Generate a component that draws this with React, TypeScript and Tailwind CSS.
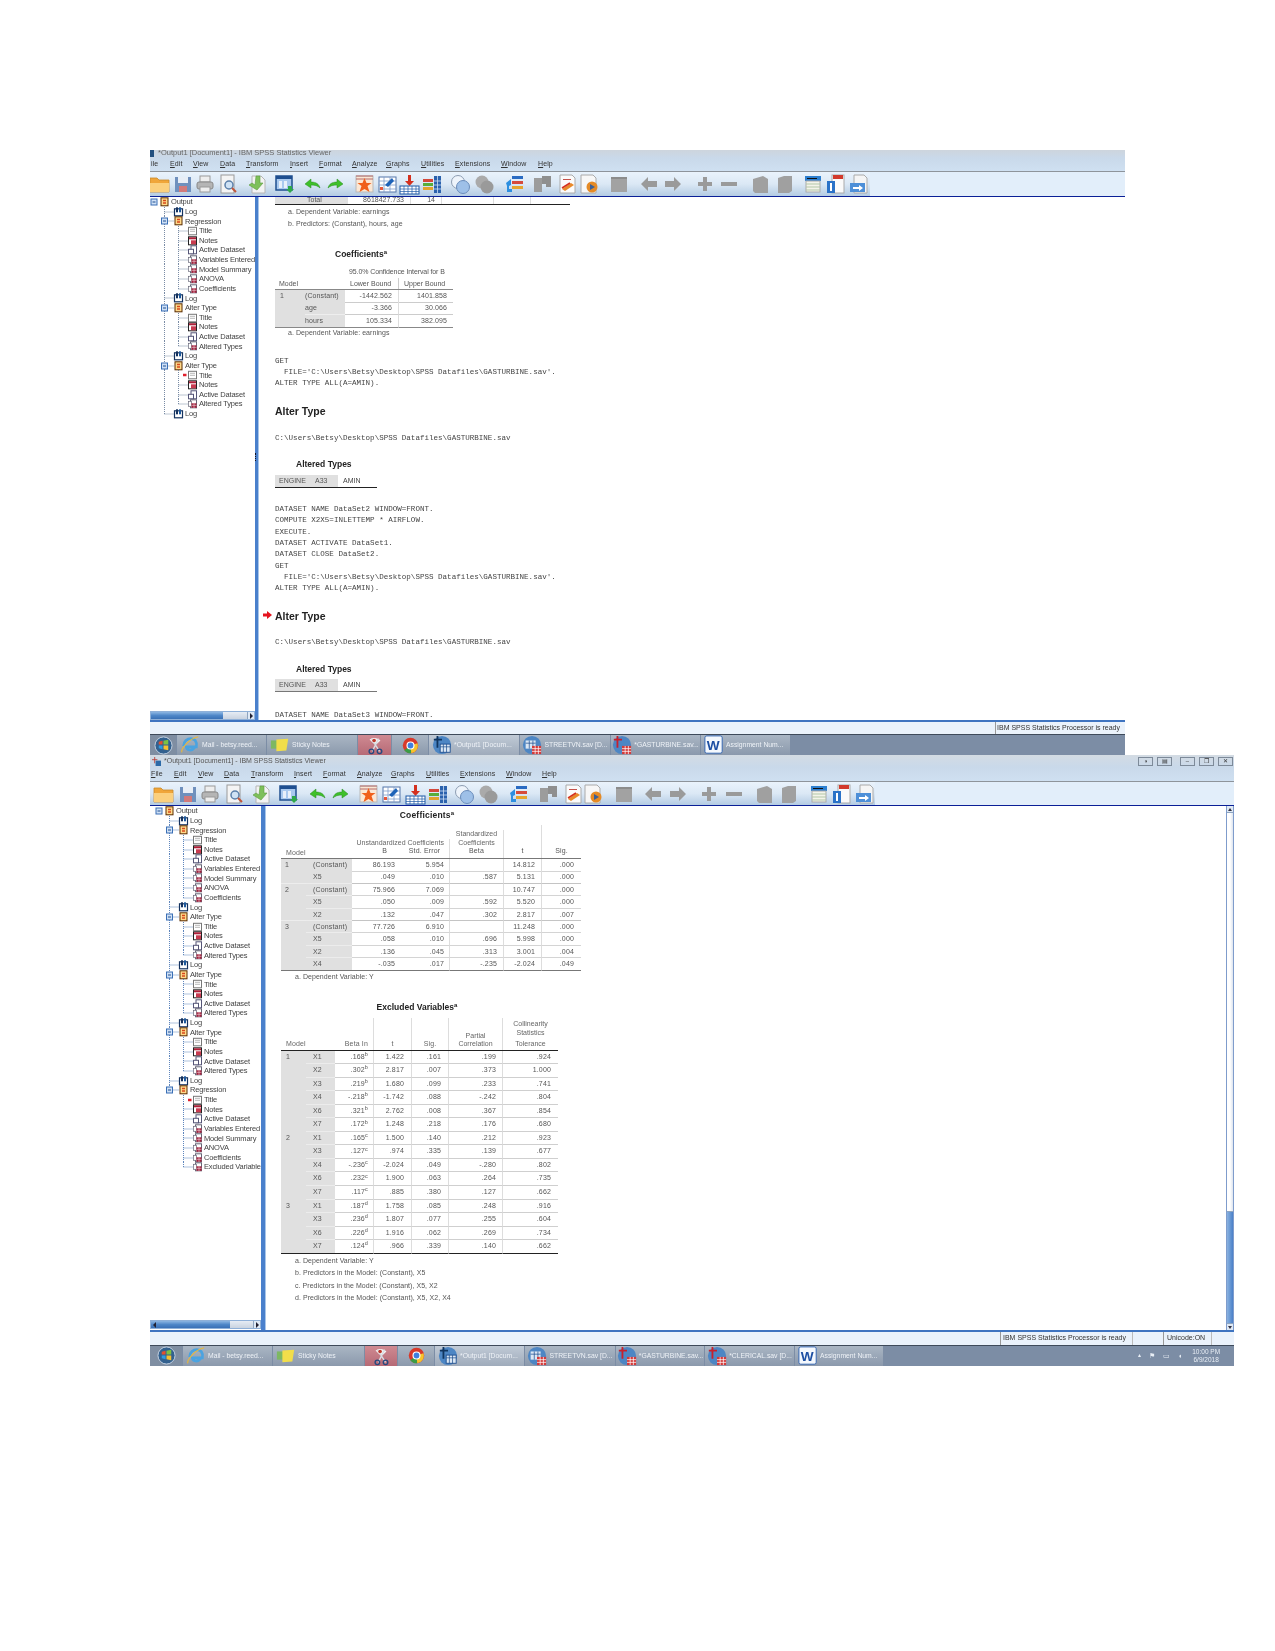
import React from "react";

const TOP_GAPS = [0,23,22,23,28,29,27,23,29,23,22,23,28,24,30,28,25,22,29,31,24,32,24,32,24,28,23,23];
const BOTTOM_GAPS = [0,24,22,24,26,29,28,23,28,23,24,23,26,24,30,30,25,20,30,30,25,31,25,31,24,30,23,23];
const TOOLS = ["folder","save","print","preview","goto","export","undo","redo","star","gridup","griddown","bars","circles","circlesg","list","tree","pen","pageo","square","left","right","plus","minus","cube","cube2","note","tpage","expage"];

function ToolIcon({ name }: { name: string }) {
  const g = "#9a9a9a";
  switch (name) {
    case "folder": return <><path d="M1 5h7l2 2h10v12H1z" fill="#f0a63a" stroke="#c98a2c" strokeWidth=".8"/><path d="M1 10h19v9H1z" fill="#fbd07e"/></>;
    case "save": return <><rect x="3" y="4" width="16" height="15" fill="#6f90bd"/><rect x="6" y="4" width="10" height="6" fill="#e8eef6"/><rect x="7" y="13" width="8" height="6" fill="#d27a7a"/></>;
    case "print": return <><rect x="6" y="3" width="10" height="6" fill="#eee" stroke={g}/><rect x="3" y="9" width="16" height="7" rx="2" fill="#b5b5b5" stroke="#888"/><rect x="6" y="14" width="10" height="5" fill="#eee" stroke={g}/></>;
    case "preview": return <><rect x="4" y="2" width="13" height="18" fill="#f4f4f4" stroke={g}/><circle cx="12" cy="12" r="4" fill="#cfe2f5" stroke="#5a7faa" strokeWidth="1.5"/><path d="M15 15l4 4" stroke="#c0553a" strokeWidth="2"/></>;
    case "goto": return <><path d="M7 3h9l4 4v13H7z" fill="#f3f3f3" stroke="#b5b5b5"/><path d="M11 3h4v7h3l-6 7-8-5 3-2 3 2z" fill="#7ec05a" stroke="#5d9c3f" strokeWidth=".6"/></>;
    case "export": return <><rect x="2" y="3" width="16" height="14" fill="#a9c9ef" stroke="#1f4f90" strokeWidth="1.5"/><rect x="2" y="3" width="16" height="3" fill="#1f4f90"/><rect x="5" y="8" width="3" height="7" fill="#e8f0fa"/><rect x="10" y="8" width="3" height="7" fill="#e8f0fa"/><path d="M14 13h4v3h2l-4 4-4-4h2z" fill="#2fa84a"/></>;
    case "undo": return <path d="M4 11l6-5v3c5 0 8 2 9 6-2-2-5-3-9-3v3z" fill="#3fc02a" stroke="#2a8a22" strokeWidth=".5"/>;
    case "redo": return <path d="M19 11l-6-5v3c-5 0-8 2-9 6 2-2 5-3 9-3v3z" fill="#3fc02a" stroke="#2a8a22" strokeWidth=".5"/>;
    case "star": return <><rect x="3" y="3" width="17" height="16" fill="#fbe7d4" stroke="#b9b9b9"/><path d="M3 6h17M3 3h17" stroke="#b46a6a"/><path d="M11.500 5l2 5h5l-4 3 2 6-5-3-5 3 2-6-4-3h5z" fill="#f0601a"/></>;
    case "gridup": return <><rect x="3" y="4" width="17" height="15" fill="#fff" stroke="#5577aa"/><path d="M3 8h17M3 12h17M3 16h17M8 4v15M14 4v15" stroke="#7f9dc9" strokeWidth=".8"/><path d="M9 12l7-7 2 3-6 6z" fill="#1e63b8"/><rect x="4" y="14" width="3" height="3" fill="#e6573a"/></>;
    case "griddown": return <><rect x="10" y="2" width="3" height="7" fill="#d4301e"/><path d="M7 8h9l-4.500 5z" fill="#d4301e"/><rect x="2" y="13" width="19" height="8" fill="#fff" stroke="#1e5aa8"/><path d="M2 16h19M2 18.500h19M6 13v8M10 13v8M14 13v8M18 13v8" stroke="#1e5aa8" strokeWidth=".7"/></>;
    case "bars": return <><rect x="2" y="6" width="10" height="3" fill="#d4483a"/><rect x="2" y="10" width="10" height="3" fill="#58ad3a"/><rect x="2" y="14" width="10" height="3" fill="#e2a32e"/><rect x="13" y="3" width="7" height="17" fill="#2b62ad"/><path d="M13 8h7M13 12h7M13 16h7M16.500 3v17" stroke="#cfe0f5" strokeWidth=".8"/></>;
    case "circles": return <><circle cx="9" cy="9" r="6.500" fill="#eef4fb" stroke="#8d9db2"/><circle cx="14" cy="14" r="6.500" fill="#9ec0e8" stroke="#6b8dbb"/></>;
    case "circlesg": return <><circle cx="9" cy="9" r="6.500" fill="#aaa"/><circle cx="14" cy="14" r="6.500" fill="#9a9a9a"/></>;
    case "list": return <><rect x="9" y="3" width="11" height="3" fill="#2a6bc2"/><rect x="9" y="8" width="11" height="3" fill="#d64b3c"/><rect x="9" y="13" width="11" height="3" fill="#e6a52e"/><path d="M3 10l5-4v3h0v3l-2 1v3h3v3H4v-6z" fill="#2d8fe0"/></>;
    case "tree": return <><rect x="3" y="5" width="8" height="14" fill="#9c9c9c"/><path d="M11 3h9v11h-5v-3h-4z" fill="#8f8f8f"/></>;
    case "pen": return <><path d="M4 2h12l3 3v15H4z" fill="#fbfbfb" stroke="#aaa"/><rect x="7" y="6" width="8" height="1" fill="#c4524a"/><path d="M6 16l9-6 3 2-9 6z" fill="#e88a2a"/><path d="M6 15l8-5" stroke="#d4301e" strokeWidth="1.500"/></>;
    case "pageo": return <><path d="M3 2h12l3 3v15H3z" fill="#f7f7f7" stroke="#aaa"/><circle cx="14" cy="14" r="5.500" fill="#e58a25"/><path d="M12 11l5 3-5 3z" fill="#3a5f96"/></>;
    case "square": return <><rect x="4" y="4" width="16" height="15" fill="#a2a2a2"/><rect x="4" y="4" width="16" height="2" fill="#8c8c8c"/></>;
    case "left": return <path d="M3 11l7-7v4h9v6h-9v4z" fill={g}/>;
    case "right": return <path d="M19 11l-7-7v4H3v6h9v4z" fill={g}/>;
    case "plus": return <path d="M9 4h4v5h5v4h-5v5H9v-5H4V9h5z" fill={g}/>;
    case "minus": return <rect x="3" y="9" width="16" height="4" fill={g}/>;
    case "cube": return <path d="M3 6l10-3 5 3v14H5l-2-2z" fill="#a0a0a0"/>;
    case "cube2": return <path d="M4 5l6-2h8v15l-3 2H4z" fill="#a0a0a0"/>;
    case "note": return <><rect x="3" y="3" width="16" height="5" fill="#2c7fd0"/><rect x="5" y="5" width="10" height="1" fill="#111"/><rect x="4" y="8" width="14" height="11" fill="#f4f4ea" stroke="#aaa"/><path d="M4 11h14M4 14h14M4 17h14" stroke="#b3c7a8"/></>;
    case "tpage": return <><rect x="7" y="2" width="12" height="18" fill="#fafafa" stroke="#aaa"/><rect x="8" y="2" width="10" height="4" fill="#d23a2c"/><rect x="2" y="8" width="8" height="12" fill="#2a72c8"/><rect x="5" y="10" width="2" height="8" fill="#fff"/></>;
    case "expage": return <><path d="M6 2h10l3 3v15H6z" fill="#f5f5f5" stroke="#aaa"/><rect x="2" y="10" width="15" height="9" fill="#4d8fd8"/><path d="M5 14h6v-2l4 3-4 3v-2H5z" fill="#fff"/></>;
    default: return null;
  }
}

function Toolbar({ gaps, cut, gradWidth }: { gaps: number[]; cut?: boolean; gradWidth: string }) {
  return (
    <div className="flex h-full">
      <div className={`flex items-center overflow-hidden bg-gradient-to-b from-[#eaf3fc] via-[#dbe8f5] to-[#b4cce3] ${gradWidth} ${cut ? "pl-0" : "pl-[3px]"}`}>
        {TOOLS.map((t, i) => (
          <svg key={i} viewBox="0 0 22 22" className={`w-[22px] h-[22px] shrink-0 ${i === 0 && cut ? "-ml-[1px]" : ""}`} style={i ? { marginLeft: gaps[i] - 22 } : undefined}>
            <ToolIcon name={t} />
          </svg>
        ))}
      </div>
      <div className="flex-1 bg-[#e2eefa]" />
    </div>
  );
}

function Menu({ items, widths, cut }: { items: string[]; widths: number[]; cut?: boolean }) {
  return (
    <div className="flex items-center h-full pl-[1px] text-[7px] tracking-[0.1px] text-[#333]">
      {items.map((m, i) => (
        <span key={m} className="shrink-0" style={{ width: widths[i] }}>
          {cut && i === 0 ? m : <><u>{m[0]}</u>{m.slice(1)}</>}
        </span>
      ))}
    </div>
  );
}

type Kind = "output" | "head" | "log" | "title" | "notes" | "active" | "table";
type Node = { t: string; l: 0 | 1 | 2; k: Kind; red?: boolean };

function TreeGlyph({ k, x }: { k: Kind; x: number }) {
  const o = `translate(${x - 4.5} 0.3)`;
  if (k === "output" || k === "head")
    return <g transform={o}><rect x="1" y="0.500" width="7" height="8" fill="#ffd98a" stroke="#5a2c00"/><path d="M3 2.500h3v1.500H3zM3 5h3v1.500H3z" fill="#d8481c"/></g>;
  if (k === "log")
    return <g transform={o}><rect x="0.500" y="1.500" width="8" height="7" fill="#fff" stroke="#14325f" strokeWidth="1.200"/><rect x="2" y="0" width="2" height="5" fill="#14325f"/><rect x="5" y="0" width="2" height="5" fill="#1f5a9c"/></g>;
  if (k === "title")
    return <g transform={o}><rect x="0.500" y="1" width="8" height="7.500" fill="#fff" stroke="#777"/><path d="M2 3h5M2 5h5" stroke="#999" strokeWidth=".7"/></g>;
  if (k === "notes")
    return <g transform={o}><rect x="0.500" y="0.500" width="8" height="8" fill="#fff" stroke="#222"/><rect x="1" y="1" width="7" height="2" fill="#b0203a"/><rect x="3" y="4" width="5" height="4" fill="#c83a50"/></g>;
  if (k === "active")
    return <g transform={o}><rect x="3" y="0.500" width="5.500" height="8" fill="#fff" stroke="#557"/><rect x="0.500" y="4" width="5" height="4.500" fill="#fff" stroke="#557"/></g>;
  return <g transform={o}><rect x="2.500" y="0.500" width="6" height="8" fill="#fff" stroke="#667"/><rect x="0.500" y="2" width="3" height="5" fill="#fff" stroke="#667" strokeWidth=".7"/><rect x="3.500" y="4" width="5" height="4.500" fill="#a3203c"/><path d="M3.500 6h5M6 4v5" stroke="#fff" strokeWidth=".5"/></g>;
}

function Tree({ nodes, line }: { nodes: Node[]; line: string }) {
  const lastL1 = nodes.map(n => n.l).lastIndexOf(1);
  return (
    <div>
      {nodes.map((n, i) => {
        const inL2 = n.l === 2;
        const nextL2 = nodes[i + 1]?.l === 2;
        const parent = nodes[i + 1]?.l === 2 && n.l === 1;
        const width = n.l === 0 ? 19 : n.l === 1 ? 33 : 47;
        const iconX = n.l === 0 ? 14.5 : n.l === 1 ? 28.5 : 42.5;
        return (
          <div key={i} className="flex items-center h-[9.630px] whitespace-nowrap">
            <svg width={width} height="9.630" className="shrink-0 overflow-visible">
              {n.l > 0 && i < lastL1 && <path d="M14.500 0v9.630" stroke={line} strokeDasharray="1 1" />}
              {i === lastL1 && <path d="M14.500 0v5" stroke={line} strokeDasharray="1 1" />}
              {n.l === 1 && <path d="M14.500 5h9" stroke={line} strokeDasharray="1 1" />}
              {inL2 && <path d={nextL2 ? "M28.500 0v9.630" : "M28.500 0v5"} stroke={line} strokeDasharray="1 1" />}
              {inL2 && !n.red && <path d="M28.500 5h9" stroke={line} strokeDasharray="1 1" />}
              {inL2 && n.red && <path d="M33 5h3.500" stroke="#e0202c" strokeWidth="2.500" />}
              {parent && <g><rect x="11.500" y="2" width="6" height="6" fill="#cfe0f5" stroke="#3a6fb5"/><path d="M13 5h3" stroke="#1f4f90"/></g>}
              {n.l === 0 && <g><rect x="1" y="2" width="6" height="6" fill="#cfe0f5" stroke="#3a6fb5"/><path d="M2.500 5h3" stroke="#1f4f90"/></g>}
              <TreeGlyph k={n.k} x={iconX} />
            </svg>
            <span className="ml-[2px] text-[7.500px] tracking-[-0.18px] leading-[9px] text-[#444]">{n.t}</span>
          </div>
        );
      })}
    </div>
  );
}

const L2 = (t: string, k: Kind, red?: boolean): Node => ({ t, l: 2, k, red });
const L1 = (t: string, k: Kind): Node => ({ t, l: 1, k });
const regression = (red?: boolean, ex?: boolean): Node[] => [L1("Regression", "head"), L2("Title", "title", red), L2("Notes", "notes"), L2("Active Dataset", "active"), L2("Variables Entered", "table"), L2("Model Summary", "table"), L2("ANOVA", "table"), L2("Coefficients", "table"), ...(ex ? [L2("Excluded Variable", "table")] : [])];
const alter = (red?: boolean): Node[] => [L1("Alter Type", "head"), L2("Title", "title", red), L2("Notes", "notes"), L2("Active Dataset", "active"), L2("Altered Types", "table")];
const LOG = L1("Log", "log");
const topTree: Node[] = [{ t: "Output", l: 0, k: "output" }, LOG, ...regression(), LOG, ...alter(), LOG, ...alter(true), LOG];
const botTree: Node[] = [{ t: "Output", l: 0, k: "output" }, LOG, ...regression(), LOG, ...alter(), LOG, ...alter(), LOG, ...alter(), LOG, ...regression(true, true)];

function HScroll({ left }: { left?: boolean }) {
  return (
    <div className="flex h-[9px] mt-auto border border-[#8fb0d8]">
      <div className={`flex items-center bg-gradient-to-b from-[#8db6e2] via-[#4f87c8] to-[#3a70b5] ${left ? "w-[79px]" : "w-[72px]"}`}>
        {left && <span className="w-0 h-0 ml-[2px] border-y-[3px] border-y-transparent border-r-[3px] border-r-[#223]" />}
      </div>
      <div className="flex-1 bg-gradient-to-b from-[#e6ecf4] to-[#c9d3e0]" />
      <div className="w-[7px] flex items-center justify-center bg-[#dfe9f5] border-l border-[#8fa5c0]">
        <span className="w-0 h-0 border-y-[3px] border-y-transparent border-l-[3px] border-l-[#223]" />
      </div>
    </div>
  );
}

const Orb = () => (
  <svg viewBox="0 0 20 20" className="w-[19px] h-[19px]">
    <circle cx="10" cy="10" r="9" fill="#33618f" stroke="#c6d4e4" />
    <path d="M5 6l4-1v4H5z" fill="#e5502c" /><path d="M10 5l5-1v5h-5z" fill="#7cc142" />
    <path d="M5 10h4v4l-4-1z" fill="#2f9be0" /><path d="M10 10h5v5l-5-1z" fill="#f6c02e" />
  </svg>
);

function AppIcon({ k }: { k: string }) {
  if (k === "ie") return <svg viewBox="0 0 22 22" className="w-[20px] h-[20px] shrink-0"><path d="M4 12c0-5 4-8 8-8s7 3 6 9H7c0 4 6 5 9 1" fill="none" stroke="#4ba3e0" strokeWidth="3"/><path d="M2 19C1 15 10 4 20 2" fill="none" stroke="#e8b93a" strokeWidth="1.200"/></svg>;
  if (k === "sticky") return <svg viewBox="0 0 22 22" className="w-[20px] h-[20px] shrink-0"><rect x="1" y="6" width="7" height="9" fill="#7db862"/><path d="M7 5l13-1-2 13-11 1z" fill="#f1de4a"/></svg>;
  if (k === "snip") return <svg viewBox="0 0 22 22" className="w-[20px] h-[20px] shrink-0"><path d="M5 5c4-3 9-2 12 1l-4 4-4-1z" fill="#f3f3f3"/><path d="M7 4l9 14M15 4L8 18" stroke="#d9dde3" strokeWidth="1.500"/><circle cx="7" cy="18" r="2.500" fill="none" stroke="#274a80" strokeWidth="1.500"/><circle cx="16" cy="18" r="2.500" fill="none" stroke="#274a80" strokeWidth="1.500"/><circle cx="10" cy="6" r="2" fill="#c0392b"/></svg>;
  if (k === "chrome") return <svg viewBox="0 0 22 22" className="w-[17px] h-[17px] shrink-0"><circle cx="11" cy="11" r="10" fill="#d8392b"/><path d="M11 11L3 17a10 10 0 0 0 9 4z" fill="#3a9c45"/><path d="M11 11l1 10a10 10 0 0 0 8-13z" fill="#f6c42d"/><circle cx="11" cy="11" r="4.500" fill="#3f7fe0" stroke="#fff" strokeWidth="1.500"/></svg>;
  if (k === "word") return <svg viewBox="0 0 22 22" className="w-[20px] h-[20px] shrink-0"><rect x="1" y="1" width="19" height="19" rx="2" fill="#f4f8fd" stroke="#2b5fb0"/><text x="10" y="16" textAnchor="middle" fontSize="15" fontWeight="700" fill="#1d4fa3" fontFamily="Liberation Sans">W</text></svg>;
  if (k === "out") return <svg viewBox="0 0 22 22" className="w-[20px] h-[20px] shrink-0"><circle cx="11" cy="11" r="10" fill="#4d86c4"/><path d="M6 1v13M2 5h9" stroke="#11355f" strokeWidth="2"/><rect x="9" y="10" width="11" height="9" fill="#dbe7f4" stroke="#1f4f90"/><path d="M9 13h11M12.500 10v9M16 10v9" stroke="#1f4f90" strokeWidth=".8"/></svg>;
  if (k === "red") return <svg viewBox="0 0 22 22" className="w-[20px] h-[20px] shrink-0"><circle cx="11" cy="11" r="10" fill="#4d86c4"/><path d="M6 1v13M2 5h9" stroke="#c8202c" strokeWidth="2"/><rect x="11" y="12" width="10" height="9" fill="#d43a3a"/><path d="M11 15h10M11 18h10M14.500 12v9M18 12v9" stroke="#fff" strokeWidth=".8"/></svg>;
  return <svg viewBox="0 0 22 22" className="w-[20px] h-[20px] shrink-0"><circle cx="11" cy="11" r="10" fill="#4d86c4"/><rect x="4" y="6" width="11" height="9" fill="#dbe7f4"/><path d="M4 9h11M8 6v9M12 6v9" stroke="#1f4f90" strokeWidth=".8"/><rect x="11" y="12" width="10" height="9" fill="#d43a3a"/><path d="M11 15h10M11 18h10M14.500 12v9M18 12v9" stroke="#fff" strokeWidth=".8"/></svg>;
}

type Btn = { w: number; k: string; t?: string; hl?: boolean; snip?: boolean };
function Taskbar({ btns, orb }: { btns: Btn[]; orb: string }) {
  return (
    <div className="flex h-full gap-[1px] bg-[#7c8da5] border-t border-[#3e4a5a] overflow-hidden">
      <div className={`flex items-center justify-center shrink-0 bg-[#7f8ea2] ${orb}`}><Orb /></div>
      {btns.map((b, i) => (
        <div key={i} style={{ width: b.w }} className={`flex items-center justify-center shrink-0 gap-[2px] px-[3px] text-[6.800px] whitespace-nowrap overflow-hidden text-[#eef2f7] ${b.snip ? "bg-gradient-to-b from-[#cf8a92] to-[#b66a76]" : b.hl ? "bg-gradient-to-b from-[#c0cad6] to-[#9fabbb]" : "bg-gradient-to-b from-[#aab6c4] to-[#8b99ac]"}`}>
          <AppIcon k={b.k} />
          {b.t && <span className="flex-1">{b.t}</span>}
        </div>
      ))}
    </div>
  );
}

const Cap = ({ c, children }: { c: string; children: React.ReactNode }) => <div className={`${c} leading-[12px] text-[7px] tracking-[0.05px] text-[#555]`}>{children}</div>;
const MONO = "font-['Liberation_Mono',monospace] text-[7.550px] text-[#444]";
const Code = ({ lines, c }: { lines: string[]; c: string }) => (
  <div className={c}>
    {lines.map((l, i) => <div key={i} className={`h-[11.300px] leading-[11.300px] whitespace-pre ${MONO}`}>{l}</div>)}
  </div>
);
const Heading = ({ c, arrow }: { c: string; arrow?: boolean }) => (
  <div className={`relative h-[14px] leading-[14px] text-[10.500px] font-bold text-[#222] ${c}`}>
    {arrow && <svg viewBox="0 0 9 8" className="absolute -left-[12px] top-[2.500px] w-[9px] h-[8px]"><path d="M0 2.500h4V0l5 4-5 4V5.500H0z" fill="#e5141e" /></svg>}
    Alter Type
  </div>
);
const FILE_LINE = "C:\\Users\\Betsy\\Desktop\\SPSS Datafiles\\GASTURBINE.sav";
const PathLine = () => <div className={`h-[12px] leading-[12px] mt-[13.500px] ${MONO}`}>{FILE_LINE}</div>;
const Altered = ({ dark, c }: { dark?: boolean; c: string }) => (
  <>
    <div className={`${c} h-[13px] leading-[13px] pl-[21px] text-[8.500px] font-bold text-[#222]`}>Altered Types</div>
    <div className={`flex h-[13px] w-[102px] text-[7px] leading-[12px] text-[#555] border-b ${dark ? "mt-[4px] border-[#222]" : "mt-[3px] border-[#777]"}`}>
      <div className="flex w-[63px] bg-[#e0e0e0] pl-[4px]"><span className="w-[36px]">ENGINE</span><span>A33</span></div>
      <span className="pl-[5px] text-[#444]">AMIN</span>
    </div>
  </>
);

function TopCoeffs() {
  const rows = [["1", "(Constant)", "-1442.562", "1401.858"], ["", "age", "-3.366", "30.066"], ["", "hours", "105.334", "382.095"]];
  return (
    <div className="w-[178px] mt-[6px] text-[7px] text-[#555]">
      <div className="grid grid-cols-[30px_40px_54px_54px] h-[24px] border-b border-[#888]">
        <div className="col-span-2 row-span-2 self-end pl-[4px] leading-[10px]">Model</div>
        <div className="col-span-2 pl-[4px] leading-[12px] whitespace-nowrap tracking-[-0.1px]">95.0% Confidence Interval for B</div>
        <div className="pl-[5px] leading-[11px] border-r border-[#ccc] whitespace-nowrap">Lower Bound</div>
        <div className="pl-[5px] leading-[11px] whitespace-nowrap">Upper Bound</div>
      </div>
      {rows.map((r, i) => (
        <div key={i} className="grid grid-cols-[30px_40px_54px_54px] h-[12.400px] leading-[12px] tracking-[0.1px]">
          <div className={`bg-[#e0e0e0] pl-[5px] ${i === 2 ? "border-b border-[#888]" : ""}`}>{r[0]}</div>
          <div className={`bg-[#e0e0e0] ${i < 2 ? "border-b border-[#eee]" : "border-b border-[#888]"}`}>{r[1]}</div>
          <div className={`text-right pr-[6px] border-r border-[#ddd] ${i < 2 ? "border-b border-b-[#ccc]" : "border-b border-b-[#888]"}`}>{r[2]}</div>
          <div className={`text-right pr-[6px] ${i < 2 ? "border-b border-[#ccc]" : "border-b border-[#888]"}`}>{r[3]}</div>
        </div>
      ))}
    </div>
  );
}

function TopContent() {
  return (
    <div className="pl-[16px] h-full overflow-hidden text-[#555] font-['Liberation_Sans',sans-serif]">
      <div className="flex w-[295px] h-[8px] border-b border-[#222] text-[7px] leading-[5px] text-[#555] overflow-hidden">
        <div className="w-[73px] bg-[#e0e0e0] pl-[32px]">Total</div>
        <div className="w-[63px] text-right pr-[6px] border-r border-r-[#ddd]">8618427.733</div>
        <div className="w-[31px] text-right pr-[6px] border-r border-r-[#ddd]">14</div>
        <div className="w-[52px] border-r border-r-[#ddd]" />
        <div className="w-[37px] border-r border-r-[#ddd]" />
      </div>
      <Cap c="mt-[1px] pl-[13px]">a. Dependent Variable: earnings</Cap>
      <Cap c="pl-[13px]">b. Predictors: (Constant), hours, age</Cap>
      <div className="mt-[18px] h-[12px] leading-[12px] pl-[60px] text-[8.500px] font-bold text-[#222]">Coefficients<sup className="text-[6px]">a</sup></div>
      <TopCoeffs />
      <Cap c="pl-[13px]">a. Dependent Variable: earnings</Cap>
      <Code c="mt-[16.500px]" lines={["GET", "  FILE='C:\\Users\\Betsy\\Desktop\\SPSS Datafiles\\GASTURBINE.sav'.", "ALTER TYPE ALL(A=AMIN)."]} />
      <Heading c="mt-[14.500px]" />
      <PathLine />
      <Altered dark c="mt-[14.500px]" />
      <Code c="mt-[16px]" lines={["DATASET NAME DataSet2 WINDOW=FRONT.", "COMPUTE X2X5=INLETTEMP * AIRFLOW.", "EXECUTE.", "DATASET ACTIVATE DataSet1.", "DATASET CLOSE DataSet2.", "GET", "  FILE='C:\\Users\\Betsy\\Desktop\\SPSS Datafiles\\GASTURBINE.sav'.", "ALTER TYPE ALL(A=AMIN)."]} />
      <Heading c="mt-[14.300px]" arrow />
      <PathLine />
      <Altered c="mt-[15px]" />
      <Code c="mt-[17.800px]" lines={["DATASET NAME DataSet3 WINDOW=FRONT."]} />
    </div>
  );
}

const COEF: [string, string, string, string, string, string, string][] = [
  ["1", "(Constant)", "86.193", "5.954", "", "14.812", ".000"],
  ["", "X5", ".049", ".010", ".587", "5.131", ".000"],
  ["2", "(Constant)", "75.966", "7.069", "", "10.747", ".000"],
  ["", "X5", ".050", ".009", ".592", "5.520", ".000"],
  ["", "X2", ".132", ".047", ".302", "2.817", ".007"],
  ["3", "(Constant)", "77.726", "6.910", "", "11.248", ".000"],
  ["", "X5", ".058", ".010", ".696", "5.998", ".000"],
  ["", "X2", ".136", ".045", ".313", "3.001", ".004"],
  ["", "X4", "-.035", ".017", "-.235", "-2.024", ".049"],
];

function CoefTable() {
  const cols = "grid grid-cols-[25px_45.500px_48.500px_50px_54px_38px_39px]";
  return (
    <div className="w-[300px] text-[7px] text-[#555] tracking-[0.15px]">
      <div className={`${cols} grid-rows-[22px_11px] border-b border-[#777] leading-[8.500px]`}>
        <div className="col-span-2 row-span-2 self-end pl-[5px] pb-[1px] text-[#666]">Model</div>
        <div className="col-span-2 self-end text-center text-[#666] border-r border-[#ddd] tracking-[0px] whitespace-nowrap">Unstandardized Coefficients</div>
        <div className="text-center self-end border-r border-[#ddd] text-[#666] tracking-[0px]">Standardized<br />Coefficients</div>
        <div className="border-r border-[#ddd]" /><div />
        <div className="text-center pl-[18px]">B</div>
        <div className="text-center border-r border-[#ddd]">Std. Error</div>
        <div className="text-center border-r border-[#ddd]">Beta</div>
        <div className="text-center border-r border-[#ddd]">t</div>
        <div className="text-center">Sig.</div>
      </div>
      {COEF.map((r, i) => {
        const end = i === COEF.length - 1;
        const groupEnd = COEF[i + 1]?.[0] !== "" ;
        const line = end ? "border-b border-b-[#777]" : groupEnd ? "border-b border-b-[#c4c4c4]" : "border-b border-b-[#d4d4d4]";
        return (
          <div key={i} className={`${cols} h-[12.400px] leading-[11.500px]`}>
            <div className={`bg-[#e0e0e0] pl-[4px] ${end ? "border-b border-b-[#777]" : groupEnd ? "border-b border-b-[#ededed]" : ""}`}>{r[0]}</div>
            <div className={`bg-[#e0e0e0] pl-[7px] ${end ? "border-b border-b-[#777]" : "border-b border-b-[#ececec]"}`}>{r[1]}</div>
            <div className={`text-right pr-[5px] ${line}`}>{r[2]}</div>
            <div className={`text-right pr-[5px] border-r border-r-[#ddd] ${line}`}>{r[3]}</div>
            <div className={`text-right pr-[6px] border-r border-r-[#ddd] ${line}`}>{r[4]}</div>
            <div className={`text-right pr-[6px] border-r border-r-[#ddd] ${line}`}>{r[5]}</div>
            <div className={`text-right pr-[7px] ${line}`}>{r[6]}</div>
          </div>
        );
      })}
    </div>
  );
}

const EXC: [string, string, string, string, string, string, string, string][] = [
  ["1", "X1", ".168", "b", "1.422", ".161", ".199", ".924"],
  ["", "X2", ".302", "b", "2.817", ".007", ".373", "1.000"],
  ["", "X3", ".219", "b", "1.680", ".099", ".233", ".741"],
  ["", "X4", "-.218", "b", "-1.742", ".088", "-.242", ".804"],
  ["", "X6", ".321", "b", "2.762", ".008", ".367", ".854"],
  ["", "X7", ".172", "b", "1.248", ".218", ".176", ".680"],
  ["2", "X1", ".165", "c", "1.500", ".140", ".212", ".923"],
  ["", "X3", ".127", "c", ".974", ".335", ".139", ".677"],
  ["", "X4", "-.236", "c", "-2.024", ".049", "-.280", ".802"],
  ["", "X6", ".232", "c", "1.900", ".063", ".264", ".735"],
  ["", "X7", ".117", "c", ".885", ".380", ".127", ".662"],
  ["3", "X1", ".187", "d", "1.758", ".085", ".248", ".916"],
  ["", "X3", ".236", "d", "1.807", ".077", ".255", ".604"],
  ["", "X6", ".226", "d", "1.916", ".062", ".269", ".734"],
  ["", "X7", ".124", "d", ".966", ".339", ".140", ".662"],
];

function ExcTable() {
  const cols = "grid grid-cols-[25px_29px_38px_39px_37px_54px_55px]";
  return (
    <div className="w-[277px] mt-[4.500px] text-[7px] tracking-[0.15px] text-[#555]">
      <div className={`${cols} h-[33px] border-b border-[#222] leading-[8.500px] text-[#666]`}>
        <div className="col-span-2 self-end pl-[5px] pb-[1px]">Model</div>
        <div className="self-end text-right pr-[5px] pb-[1px]">Beta In</div>
        <div className="self-end text-center border-x border-[#ddd] h-full flex items-end justify-center pb-[1px]">t</div>
        <div className="self-end text-center border-r border-[#ddd] h-full flex items-end justify-center pb-[1px]">Sig.</div>
        <div className="text-center border-r border-[#ddd] flex items-end justify-center pb-[1px] tracking-[0px]"><span>Partial<br />Correlation</span></div>
        <div className="text-center self-end pb-[1px] tracking-[0px]">Collinearity<br />Statistics<div className="mt-[3px]">Tolerance</div></div>
      </div>
      {EXC.map((r, i) => {
        const end = i === EXC.length - 1;
        const line = end ? "border-b border-b-[#222]" : "border-b border-b-[#cfcfcf]";
        return (
          <div key={i} className={`${cols} h-[13.550px] leading-[12.500px]`}>
            <div className={`bg-[#e0e0e0] pl-[5px] ${end ? "border-b border-b-[#222]" : ""}`}>{r[0]}</div>
            <div className={`bg-[#e0e0e0] pl-[7px] ${end ? "border-b border-b-[#222]" : "border-b border-b-[#ececec]"}`}>{r[1]}</div>
            <div className={`text-right pr-[5px] ${line}`}>{r[2]}<sup className="text-[5.500px]">{r[3]}</sup></div>
            <div className={`text-right pr-[7px] border-x border-x-[#ddd] ${line}`}>{r[4]}</div>
            <div className={`text-right pr-[7px] border-r border-r-[#ddd] ${line}`}>{r[5]}</div>
            <div className={`text-right pr-[6px] border-r border-r-[#ddd] ${line}`}>{r[6]}</div>
            <div className={`text-right pr-[7px] ${line}`}>{r[7]}</div>
          </div>
        );
      })}
    </div>
  );
}

function BottomContent() {
  return (
    <div className="flex h-full">
      <div className="flex-1 pl-[15px] pt-[3px] overflow-hidden font-['Liberation_Sans',sans-serif]">
        <div className="h-[12px] leading-[12px] w-[292px] text-center text-[8.500px] font-bold text-[#222] tracking-[0.2px]">Coefficients<sup className="text-[6px]">a</sup></div>
        <div className="mt-[4px]"><CoefTable /></div>
        <Cap c="pl-[14px]">a. Dependent Variable: Y</Cap>
        <div className="mt-[18.500px] h-[12px] leading-[12px] w-[272px] text-center text-[8.500px] font-bold text-[#222]">Excluded Variables<sup className="text-[6px]">a</sup></div>
        <ExcTable />
        <div className="mt-[1px] pl-[14px] text-[7px] tracking-[0.05px] text-[#555] leading-[12.500px]">
          <div>a. Dependent Variable: Y</div>
          <div>b. Predictors in the Model: (Constant), X5</div>
          <div>c. Predictors in the Model: (Constant), X5, X2</div>
          <div>d. Predictors in the Model: (Constant), X5, X2, X4</div>
        </div>
      </div>
      <div className="flex flex-col w-[8px] shrink-0 bg-[#f0f4fa] border-x border-[#7f9ccc]">
        <div className="h-[7px] bg-[#dfe9f5] border-b border-[#8fa5c0] flex justify-center items-center"><span className="w-0 h-0 border-x-[2px] border-x-transparent border-b-[3px] border-b-[#334]" /></div>
        <div className="h-[399px] bg-gradient-to-r from-white via-white to-[#dde4ee] border-b border-[#8fa5c0]" />
        <div className="flex-1 bg-gradient-to-r from-[#8ab2e0] to-[#4a80c8]" />
        <div className="h-[7px] bg-[#dfe9f5] border-t border-[#8fa5c0] flex justify-center items-center"><span className="w-0 h-0 border-x-[2px] border-x-transparent border-t-[3px] border-t-[#334]" /></div>
      </div>
    </div>
  );
}

function WinButton({ c, children }: { c?: string; children: React.ReactNode }) {
  return <span className={`flex items-center justify-center w-[15px] h-[9px] border border-[#7d8a99] text-[6px] leading-none text-[#333] ${c ?? ""}`}>{children}</span>;
}

const TOP_MENU = ["ile", "Edit", "View", "Data", "Transform", "Insert", "Format", "Analyze", "Graphs", "Utilities", "Extensions", "Window", "Help"];
const BOT_MENU = ["File", "Edit", "View", "Data", "Transform", "Insert", "Format", "Analyze", "Graphs", "Utilities", "Extensions", "Window", "Help"];

export default function App() {
  return (
    <div className="w-[1275px] h-[1651px] bg-white pt-[150px] pl-[150px] overflow-hidden font-['Liberation_Sans',sans-serif] blur-[0.3px]">
      {/* upper window */}
      <section className="flex flex-col w-[975px] h-[605px]">
        <div className="h-[8px] shrink-0 overflow-hidden bg-gradient-to-b from-[#cdd5dd] to-[#c9d9ea] flex items-start">
          <span className="w-[4px] h-[7px] bg-[#23507f]" />
          <span className="-mt-[2px] ml-[4px] text-[7.500px] leading-[9px] text-[#666]">*Output1 [Document1] - IBM SPSS Statistics Viewer</span>
        </div>
        <div className="h-[14px] shrink-0 bg-gradient-to-b from-[#c9d9ea] to-[#cfe0f1] border-b border-[#8e949b]">
          <Menu cut items={TOP_MENU} widths={[19, 23, 27, 26, 44, 29, 33, 34, 35, 34, 46, 37, 30]} />
        </div>
        <div className="h-[24px] shrink-0"><Toolbar cut gaps={TOP_GAPS} gradWidth="w-[720px]" /></div>
        <div className="h-[1px] shrink-0 bg-[#0a1f96]" />
        <div className="flex h-[523px] shrink-0">
          <div className="flex flex-col w-[105px] shrink-0 overflow-hidden bg-white"><Tree nodes={topTree} line="#7a8ca5" /><HScroll /></div>
          <div className="relative w-[4px] shrink-0 bg-[#4a80cc] border-r border-[#a8c6ea]">
            <span className="absolute left-0 top-[256px] h-[8px] w-[2px] border-l border-dotted border-[#112]" />
          </div>
          <div className="flex-1 min-w-0 bg-white"><TopContent /></div>
        </div>
        <div className="h-[2px] shrink-0 bg-[#3f74c0]" />
        <div className="flex justify-end h-[12px] shrink-0 bg-[#eaf2fb] text-[7px] leading-[12px] text-[#333]">
          <span className="pl-[1px] pr-[5px] border-l border-[#999]">IBM SPSS Statistics Processor is ready</span>
        </div>
        <div className="h-[21px] shrink-0">
          <Taskbar orb="w-[26px]" btns={[
            { w: 89, k: "ie", t: "Mail - betsy.reed..." }, { w: 90, k: "sticky", t: "Sticky Notes" }, { w: 33, k: "snip", snip: true }, { w: 36, k: "chrome" },
            { w: 90, k: "out", t: "*Output1 [Docum...", hl: true }, { w: 90, k: "grid", t: "STREETVN.sav [D..." }, { w: 89, k: "red", t: "*GASTURBINE.sav..." }, { w: 89, k: "word", t: "Assignment Num..." },
          ]} />
        </div>
      </section>

      {/* lower window */}
      <section className="flex flex-col w-[1084px] h-[611px]">
        <div className="flex items-center justify-between h-[12px] shrink-0 bg-gradient-to-b from-[#d3dbe3] to-[#c9d9ea] pl-[2px] pr-[1px]">
          <div className="flex items-center gap-[3px] text-[7px] text-[#555]">
            <svg viewBox="0 0 10 10" className="w-[9px] h-[9px]"><path d="M3 0v7M0 3h6" stroke="#b8433a" /><rect x="4" y="4" width="6" height="6" fill="#2c6aa8" /></svg>
            *Output1 [Document1] - IBM SPSS Statistics Viewer
          </div>
          <div className="flex items-center gap-[4px]">
            <WinButton>◑</WinButton><WinButton c="mr-[4px]">▤</WinButton><WinButton>–</WinButton><WinButton>❐</WinButton><WinButton>✕</WinButton>
          </div>
        </div>
        <div className="h-[15px] shrink-0 bg-gradient-to-b from-[#c9d9ea] to-[#cfe0f1] border-b border-[#8e949b]">
          <Menu items={BOT_MENU} widths={[23, 24, 26, 27, 43, 29, 34, 34, 35, 34, 46, 36, 30]} />
        </div>
        <div className="h-[23px] shrink-0"><Toolbar gaps={BOTTOM_GAPS} gradWidth="w-[725px]" /></div>
        <div className="h-[1px] shrink-0 bg-[#0a1f96]" />
        <div className="flex h-[524px] shrink-0">
          <div className="flex flex-col w-[111px] shrink-0 overflow-hidden bg-white pl-[5px]">
            <Tree nodes={botTree} line="#5f86bd" />
            <div className="-ml-[5px] pb-[1px] mt-auto"><HScroll left /></div>
          </div>
          <div className="w-[5px] shrink-0 bg-[#4a80cc] border-r border-[#a8c6ea]" />
          <div className="flex-1 min-w-0 bg-white"><BottomContent /></div>
        </div>
        <div className="h-[2px] shrink-0 bg-[#3f74c0]" />
        <div className="flex justify-end h-[12.500px] shrink-0 bg-[#eaf2fb] text-[7px] leading-[12px] text-[#333]">
          <span className="pl-[2px] w-[132px] border-l border-[#999] whitespace-nowrap">IBM SPSS Statistics Processor is ready</span>
          <span className="w-[31px] border-l border-[#bbb]" />
          <span className="w-[48px] pl-[3px] border-l border-[#999]">Unicode:ON</span>
          <span className="w-[23px] border-l border-[#bbb]" />
        </div>
        <div className="h-[21.500px] shrink-0 flex bg-[#7c8da5]">
          <div className="flex-1 min-w-0">
            <Taskbar orb="w-[32px]" btns={[
              { w: 89, k: "ie", t: "Mail - betsy.reed..." }, { w: 91, k: "sticky", t: "Sticky Notes" }, { w: 32, k: "snip", snip: true }, { w: 36, k: "chrome" },
              { w: 89, k: "out", t: "*Output1 [Docum...", hl: true }, { w: 90, k: "grid", t: "STREETVN.sav [D..." }, { w: 88, k: "red", t: "*GASTURBINE.sav..." }, { w: 89, k: "red", t: "*CLERICAL.sav [D..." }, { w: 88, k: "word", t: "Assignment Num..." },
            ]} />
          </div>
          <div className="flex items-center shrink-0 w-[108px] gap-[8px] pl-[12px] border-t border-[#3e4a5a] text-[#e8eef5]">
            <span className="text-[6px]">▴</span><span className="text-[7px]">⚑</span><span className="text-[7px]">▭</span><span className="text-[7px]">◖</span>
            <span className="text-[6.500px] leading-[8px] text-center ml-[2px]">10:00 PM<br />6/9/2018</span>
          </div>
        </div>
      </section>
    </div>
  );
}
